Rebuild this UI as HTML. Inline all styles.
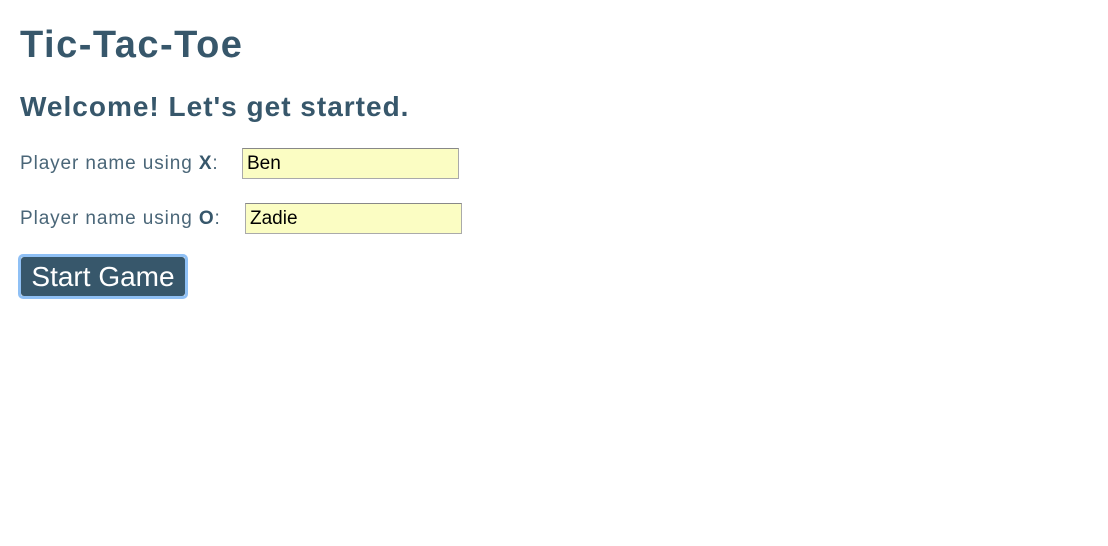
<!DOCTYPE html>
<html><head><style>
body{margin:0;background:#fff;font-family:"Liberation Sans",sans-serif;color:#37576b;width:1108px;height:546px;overflow:hidden;position:relative}
.a{position:absolute;white-space:nowrap}
h1{position:absolute;left:20px;top:24px;margin:0;font-size:38px;font-weight:bold;letter-spacing:1.5px}
h2{position:absolute;left:20px;top:91px;margin:0;font-size:28px;font-weight:bold;letter-spacing:1px}
.l{font-size:19px;color:#4a6678;letter-spacing:0.9px}
.l b{color:#37576b}
.in{position:absolute;background:#fbfdc3;border:1px solid #aaa;border-top-color:#888;box-sizing:border-box;font-size:19px;color:#000;padding-left:4px;line-height:29px}
.btn{position:absolute;left:18px;top:254px;width:170px;height:45px;box-sizing:border-box;border:3px solid #8fc0f5;border-radius:5px;}
.btn div{background:#37576b;color:#fff;font-size:28px;height:39px;line-height:39px;text-align:center;border-radius:3px}
</style></head><body>
<h1>Tic-Tac-Toe</h1>
<h2>Welcome! Let's get started.</h2>
<div class="a l" style="left:20px;top:153px">Player name using <b>X</b>:</div>
<div class="in" style="left:242px;top:148px;width:217px;height:31px">Ben</div>
<div class="a l" style="left:20px;top:208px">Player name using <b>O</b>:</div>
<div class="in" style="left:245px;top:203px;width:217px;height:31px">Zadie</div>
<div class="btn"><div>Start Game</div></div>
</body></html>
